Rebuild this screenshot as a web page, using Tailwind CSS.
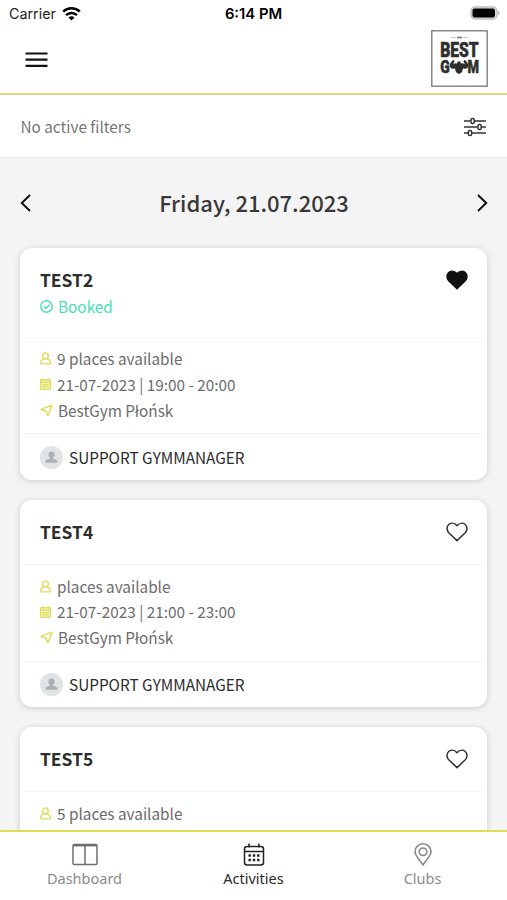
<!DOCTYPE html>
<html lang="en">
<head>
<meta charset="utf-8">
<title>Activities</title>
<script src="https://cdn.jsdelivr.net/npm/@tailwindcss/browser@4"></script>
</head>
<body class="bg-white">
<svg class="hidden">
  <symbol id="user" viewBox="0 0 12 14"><g fill="none" stroke="currentColor" stroke-width="1.5"><ellipse cx="6" cy="4.2" rx="3" ry="3.400"/><path d="M4 7.200C2 8.300.8 8.600.8 10.800v1.100q0 .9.9.9h8.600q.9 0 .9-.9v-1.100C11.200 8.600 10 8.300 8 7.200"/></g></symbol>
  <symbol id="cal" viewBox="0 0 12 13"><rect x=".6" y="1.800" width="10.800" height="10.500" rx="1" fill="currentColor" fill-opacity=".4" stroke="currentColor" stroke-width="1.300"/><path d="M.6 4.500h10.800M3 .3v2.500M9 .3v2.500M2.500 7.200h7M2.500 9.500h7" stroke="currentColor" stroke-width="1.200"/></symbol>
  <symbol id="nav" viewBox="0 0 14 14"><path d="M13 1.200 8.600 12.600 6.400 7.800 1 5.700Z" fill="none" stroke="currentColor" stroke-width="1.500" stroke-linejoin="round"/></symbol>
  <symbol id="avatar" viewBox="0 0 23 23"><circle cx="11.500" cy="11.500" r="11.500" fill="#e0e4e4"/><circle cx="11.500" cy="8.700" r="3.100" fill="#acb1b3"/><path d="M10 10h3v2.500l3.300 1.200q1.200.5 1.200 1.800v1.300h-12v-1.300q0-1.300 1.200-1.800L10 12.500Z" fill="#acb1b3"/></symbol>
  <symbol id="heart" viewBox="0 0 24 22"><path d="M12 19.600 3.700 11.800C1.300 9 1.600 5.300 3.700 3.500 6.200 1.600 9.700 2 12 4.700 14.300 2 17.800 1.600 20.300 3.500 22.400 5.300 22.700 9 20.300 11.800Z" stroke="currentColor" stroke-width="1.500" stroke-linejoin="round"/></symbol>
</svg>
<div class="w-[507px] h-[900px] overflow-hidden flex flex-col bg-white font-['Noto_Sans_CJK_JP','Noto_Sans',sans-serif]">
  <div class="h-7 shrink-0 grid grid-cols-3 items-center pl-[9px] pr-[7px] font-['Inter',sans-serif] text-[14.800px] text-[#222]">
    <div class="flex items-center gap-[6px] pb-px"><span class="text-[14.300px]">Carrier</span>
      <svg class="w-[19px] h-[14px]" viewBox="0 0 19 14" fill="none" stroke="#000" stroke-width="2.500"><path d="M1.200 4.700a12 12 0 0 1 16.600 0M4 8.200a8 8 0 0 1 11 0"/><path d="M9.500 13.500 6.500 10.600a4.500 4.500 0 0 1 6 0Z" fill="#000" stroke="none"/></svg>
    </div>
    <div class="text-center font-semibold text-black whitespace-nowrap pr-[2px]">6:14 PM</div>
    <svg class="justify-self-end w-[30px] h-[14px] mb-[2px]" viewBox="0 0 30 14"><rect x="1" y="1" width="26" height="12" rx="4" fill="#ddd" stroke="#c0c0c0" stroke-width="1.300"/><rect x="2.500" y="2.500" width="22.500" height="9" rx="2"/><path d="M28 5v4q1.500-.5 1.500-2T28 5" fill="#aaa"/></svg>
  </div>
  <header class="h-[67px] shrink-0 border-b-2 border-[#ded77b] flex items-start justify-between pl-[25px] pr-[19px] pt-[2px]">
    <svg class="w-[23px] h-[16px] mt-[22px]" viewBox="0 0 23 16" stroke="#111" stroke-width="2.200"><path d="M.5 1.500h22M.5 7.700h22M.5 13.800h22"/></svg>
    <svg class="w-[57px] h-[57px]" viewBox="0 0 57 57">
      <rect x=".8" y=".8" width="55.400" height="55.400" fill="#fff" stroke="#777" stroke-width="1.300"/>
      <path d="M20 7.500h5M32 7.500h5" stroke="#bbb" stroke-width=".8"/><path d="M26 7.500h5" stroke="#777" stroke-width="1.600"/>
      <g fill="#2e2e2e" stroke="#2e2e2e" stroke-width=".5" font-family="Roboto, sans-serif" font-weight="900">
        <text x="9.200" y="27" font-size="21" textLength="38.500" lengthAdjust="spacingAndGlyphs">BEST</text>
        <text x="9.200" y="43" font-size="18" textLength="9.500" lengthAdjust="spacingAndGlyphs">G</text>
        <text x="36.500" y="43" font-size="18" textLength="11.500" lengthAdjust="spacingAndGlyphs">M</text>
      </g>
      <path d="M22 29.800 19.200 33.500Q17.800 37.500 21 38.800L24 38.600 25 42.300 28 44 31 42.300 32 38.600 35 38.800Q38.200 37.500 36.800 33.500L34 29.800 32.300 31.200 34 34.200Q31.500 32.800 29.800 33.600L29.500 31.500H26.500L26.200 33.600Q24.500 32.800 22 34.200L23.700 31.200Z" fill="#2e2e2e"/>
    </svg>
  </header>
  <div class="h-[63px] shrink-0 border-b border-[#ececec] flex items-center justify-between pl-[20.500px] pr-[21px]">
    <span class="text-[15.300px] leading-[24px] text-[#777] pb-px">No active filters</span>
    <svg class="w-[22px] h-[20px] mt-[2px]" viewBox="0 0 22 20" fill="none" stroke="#333" stroke-width="1.500"><path d="M0 4h6.500M10.500 4H22M0 10h13.500M17.500 10H22M0 16h4M8 16h14"/><rect x="7" y="1.500" width="3.200" height="5" rx="1.300"/><rect x="14" y="7.500" width="3.200" height="5" rx="1.300"/><rect x="4.400" y="13.500" width="3.200" height="5" rx="1.300"/></svg>
  </div>
  <main class="flex-1 min-h-0 overflow-hidden bg-[#f4f4f4] px-5">
    <div class="h-[90px] flex items-center justify-between">
      <svg class="w-[11px] h-[18px]" viewBox="0 0 11 18" fill="none" stroke="#111" stroke-width="2"><path d="M10 1 1.800 9 10 17"/></svg>
      <h1 class="text-[22px] leading-[32px] pb-[2px] font-medium text-[#383838]">Friday, 21.07.2023</h1>
      <svg class="w-[11px] h-[18px] mr-[-1px]" viewBox="0 0 11 18" fill="none" stroke="#111" stroke-width="2"><path d="m1 1 8.200 8L1 17"/></svg>
    </div>
    <div class="flex flex-col gap-5 text-[15.330px] text-[#6c6c6c]">
      <article class="h-[232px] shrink-0 rounded-[12px] bg-white shadow-[0_1px_6px_rgba(0,0,0,0.17)] px-1">
        <div class="h-[90px] border-b border-[#f7f7f7] px-4 pt-[19px] flex justify-between">
          <div>
            <h2 class="text-[17.400px] leading-[26px] font-bold text-[#2d2d2d]">TEST2</h2>
            <div class="flex items-center h-[26px] text-[#49dfb5]"><svg class="w-[13px] h-[13px] mr-[5px]" viewBox="0 0 13 13" fill="none" stroke="currentColor" stroke-width="1.400"><circle cx="6.500" cy="6.500" r="5.700"/><path d="m3.800 6.500 2 2L9.500 4.700"/></svg><span>Booked</span></div>
          </div>
          <svg class="w-6 h-[22px] mt-[2px] mr-[-2px] text-[#111]" fill="currentColor"><use href="#heart"/></svg>
        </div>
        <div class="h-[96px] border-b border-[#f2f2f2] px-4 pt-[7px]">
          <div class="h-[26px] flex items-center"><svg class="w-[11px] h-[13px] mr-[6px] text-[#dfdc55]"><use href="#user"/></svg>9 places available</div>
          <div class="h-[26px] flex items-center"><svg class="w-[11px] h-[12px] mr-[6px] text-[#dfdc55]"><use href="#cal"/></svg>21-07-2023 | 19:00 - 20:00</div>
          <div class="h-[26px] flex items-center"><svg class="w-[13px] h-[13px] mr-[5px] text-[#dfdc55]"><use href="#nav"/></svg>BestGym Płońsk</div>
        </div>
        <div class="h-[46px] px-4 flex items-center gap-[6px] text-[#2b2b2b]"><svg class="w-[23px] h-[23px]"><use href="#avatar"/></svg><span>SUPPORT GYMMANAGER</span></div>
      </article>
      <article class="h-[207px] shrink-0 rounded-[12px] bg-white shadow-[0_1px_6px_rgba(0,0,0,0.17)] px-1">
        <div class="h-[65px] border-b border-[#f2f2f2] px-4 pt-[19px] flex justify-between">
          <h2 class="text-[17.400px] leading-[26px] font-bold text-[#2d2d2d]">TEST4</h2>
          <svg class="w-6 h-[22px] mt-[2px] mr-[-2px] text-[#333]" fill="none"><use href="#heart"/></svg>
        </div>
        <div class="h-[97px] border-b border-[#f2f2f2] px-4 pt-[8px]">
          <div class="h-[26px] flex items-center"><svg class="w-[11px] h-[13px] mr-[6px] text-[#dfdc55]"><use href="#user"/></svg>places available</div>
          <div class="h-[25px] flex items-center"><svg class="w-[11px] h-[12px] mr-[6px] text-[#dfdc55]"><use href="#cal"/></svg>21-07-2023 | 21:00 - 23:00</div>
          <div class="h-[26px] flex items-center"><svg class="w-[13px] h-[13px] mr-[5px] text-[#dfdc55]"><use href="#nav"/></svg>BestGym Płońsk</div>
        </div>
        <div class="h-[45px] px-4 flex items-center gap-[6px] text-[#2b2b2b]"><svg class="w-[23px] h-[23px]"><use href="#avatar"/></svg><span>SUPPORT GYMMANAGER</span></div>
      </article>
      <article class="h-[207px] shrink-0 rounded-[12px] bg-white shadow-[0_1px_6px_rgba(0,0,0,0.17)] px-1">
        <div class="h-[65px] border-b border-[#f2f2f2] px-4 pt-[19px] flex justify-between">
          <h2 class="text-[17.400px] leading-[26px] font-bold text-[#2d2d2d]">TEST5</h2>
          <svg class="w-6 h-[22px] mt-[2px] mr-[-2px] text-[#333]" fill="none"><use href="#heart"/></svg>
        </div>
        <div class="px-4 pt-[8px]">
          <div class="h-[26px] flex items-center"><svg class="w-[11px] h-[13px] mr-[6px] text-[#dfdc55]"><use href="#user"/></svg>5 places available</div>
        </div>
      </article>
    </div>
  </main>
  <nav class="h-[70px] shrink-0 border-t-2 border-[#e2dc4f] bg-white grid grid-cols-3 font-['Noto_Sans',sans-serif] text-[14.500px] leading-[20px] text-[#8a8a8a]">
    <div class="flex flex-col items-center pt-[11px] gap-[2px]"><svg class="w-[26px] h-[23px]" viewBox="0 0 26 23" fill="none" stroke="#6d6d6d" stroke-width="1.500"><rect x="1" y="1.500" width="24" height="20" rx="1.200"/><path d="M1 2.500h24" stroke-width="1.800"/><path d="M13 3v18"/></svg><span>Dashboard</span></div>
    <div class="flex flex-col items-center pt-[11px] gap-[2px] text-[#2a2a2a]"><svg class="w-[22px] h-[23px]" viewBox="0 0 22 23" fill="none" stroke="#222" stroke-width="1.500"><rect x="1.500" y="3.500" width="19" height="18.500" rx="2.500"/><path d="M1.500 8.500h19M6 .5v4M16 .5v4"/><path d="M5.500 12.500h2.400M9.800 12.500h2.400M14.100 12.500h2.400M5.500 17h2.400M9.800 17h2.400M14.100 17h2.400" stroke-width="2.300"/></svg><span>Activities</span></div>
    <div class="flex flex-col items-center pt-[11px] gap-[2px]"><svg class="w-[18px] h-[23px]" viewBox="0 0 18 23" fill="none" stroke="#858585" stroke-width="1.500"><path d="M9 22C6 17.500 1 12.500 1 8.800a8 8 0 0 1 16 0C17 12.500 12 17.500 9 22Z"/><circle cx="9" cy="8.700" r="3.800"/></svg><span>Clubs</span></div>
  </nav>
</div>
</body>
</html>
